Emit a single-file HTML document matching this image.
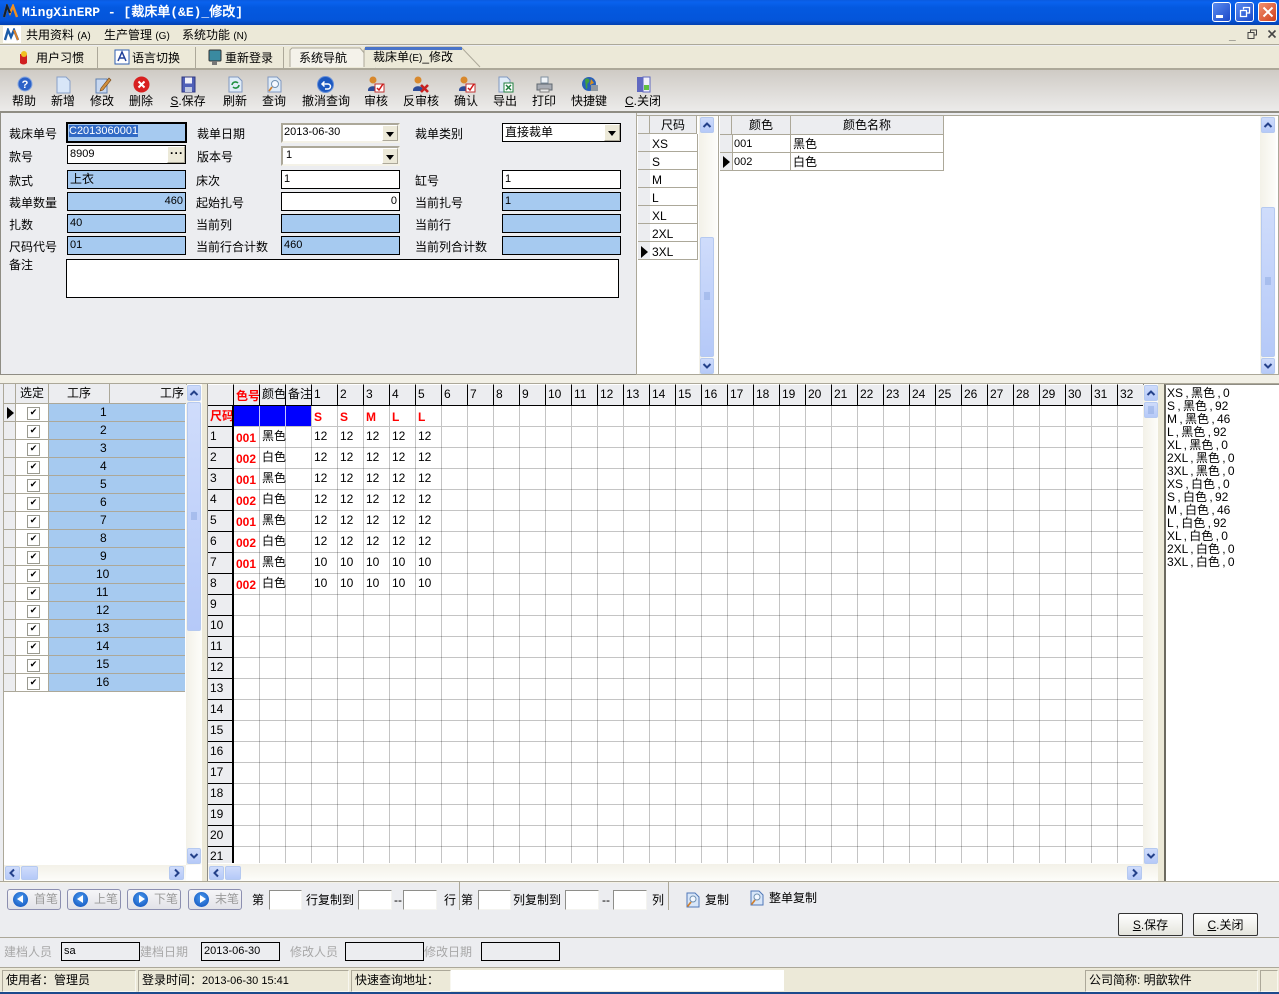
<!DOCTYPE html>
<html><head><meta charset="utf-8"><style>
html,body{margin:0;padding:0;width:1279px;height:994px;overflow:hidden;background:#ecedf0}
*{box-sizing:border-box}
body{position:relative;font:12px/14px "Liberation Sans","WenQuanYi Zen Hei","Noto Sans CJK SC",sans-serif;color:#000}
.a,.t,.f,.sb,.ti,.tb{position:absolute}
.t{white-space:nowrap;line-height:14px}
.f{border:1px solid #000;background:#a6caf0;height:19px;padding:1px 2px;line-height:15px;white-space:nowrap;font-size:11px}
.cj{font-size:12px}
.w{background:#fff}
.combo{border:2px solid;border-color:#aca899 #f4f2e8 #f4f2e8 #aca899;background:#fff}
.ar{position:absolute;right:0;top:0;bottom:0;width:16px;background:#ece9d8;border:1px solid;border-color:#fff #aca899 #aca899 #fff}
.ar.dn:after{content:"";position:absolute;left:3px;top:6px;border:4px solid transparent;border-top:5px solid #000;border-bottom:0}
.sb{background:linear-gradient(90deg,#f3f1e8,#fdfdfa)}
.btn{position:absolute;background:linear-gradient(#cfdcfb,#b5c9f8);border:1px solid #b5c9f0;border-radius:2px;color:#24418a;text-align:center}
.btn svg{display:block;margin:auto}
.th{position:absolute;background:#ecedf0;border-right:1px solid #aca899;border-bottom:1px solid #aca899;text-align:center;line-height:18px}
.gr{position:absolute;display:flex}
.gr i{font-style:normal;display:block;width:26px;height:22px;flex:none;padding-left:2px;line-height:19px;background:#ecedf0;border-right:1px solid #000;border-bottom:1px solid #000;border-top:1px solid #fff}
.rows{position:absolute;left:208px;top:427px;width:26px;height:436px;overflow:hidden}
.rows i{font-style:normal;display:block;height:21px;background:#ecedf0;padding:1px 0 0 2px;line-height:17px;border-right:2px solid #000;border-bottom:1px solid #000}
.dr{position:absolute;left:234px;display:flex;height:21px;line-height:19px}
.dr span{display:block;width:26px;flex:none;padding-left:2px}
.dr span:first-child{color:#f00;font-weight:bold;padding-top:2px}
.pr{position:absolute;left:16px;width:169px;height:18px;border-bottom:1px solid #aca899;display:flex}
.pr b{display:block;width:33px;background:#fff;border-right:1px solid #aca899;position:relative}
.pr b:after{content:"✔";position:absolute;left:11px;top:3px;width:11px;height:11px;border:1px solid #9a9a90;background:#fff;font:9px/10px "DejaVu Sans";text-align:center}
.pr em{font-style:normal;display:block;flex:1;background:#a6caf0;padding-left:51px;line-height:16px}
.pr em.d{padding-left:47px}
.ind{position:absolute;left:4px;width:12px;height:18px;background:#ecedf0;border-bottom:1px solid #aca899;border-right:1px solid #aca899}
.tri{position:absolute;border:6px solid transparent;border-left:7px solid #000;border-right:0}
.nav{position:absolute;top:889px;height:21px;border:1px solid #8c8fb0;border-radius:3px;background:linear-gradient(#f6f6f8,#e2e3e8);color:#9a9a9a;line-height:18px;padding-left:26px}
.nav:before{content:"";position:absolute;left:5px;top:2px;width:15px;height:15px;border-radius:50%;background:radial-gradient(circle at 50% 40%,#4c9cf0,#0a4cb8)}
.nav u{position:absolute;left:9px;top:5px;text-decoration:none;border:4px solid transparent;border-right:6px solid #fff;border-left:0}
.nav u.r{border-left:6px solid #fff;border-right:0;left:11px}
.in{position:absolute;top:890px;height:20px;background:#fff;border:1px solid;border-color:#8e8e8a #f4f4f0 #f4f4f0 #8e8e8a}
.pb{position:absolute;top:913px;width:65px;height:23px;border:1px solid #333;border-radius:2px;background:linear-gradient(#fff,#e4e4dc);text-align:center;line-height:22px}
.au{position:absolute;top:942px;height:19px;border:1px solid #000;background:#ecedf0;padding:1px 2px;line-height:15px;font-size:11px}
.st{position:absolute;top:970px;height:22px;background:#ece9d8;border:1px solid;border-color:#aca899 #f8f7f0 #f8f7f0 #aca899;line-height:19px;padding-left:3px;white-space:nowrap}
.ti{top:76px}
.tb{top:94px;transform:translateX(-50%);white-space:nowrap;line-height:14px}
.g{color:#a8a8a8}
.ln{position:absolute;background:#aca899}
.m{font-size:10px}
</style></head><body>

<!-- title bar -->
<div class="a" style="left:0;top:0;width:1279px;height:25px;background:linear-gradient(#0a5be0 0,#0a62ee 8%,#0459e0 30%,#0455da 80%,#0340b0 100%)"></div>
<svg class="a" style="left:3px;top:4px" width="16" height="14"><path d="M1 13L4 2L7 9L10 2L14 13" fill="none" stroke="#f09020" stroke-width="2.4"/><path d="M1 13L4 2L7 9" fill="none" stroke="#102030" stroke-width="2.2"/></svg>
<div class="t" style="left:22px;top:5px;color:#fff;font:bold 13px/16px 'Liberation Mono','WenQuanYi Zen Hei',monospace;white-space:pre">MingXinERP - [裁床单(&amp;E)_修改]</div>
<div class="a" style="left:1212px;top:2px;width:19px;height:20px;border:1px solid #fff;border-radius:3px;background:linear-gradient(135deg,#5a8cf0,#1c48c8)"><div class="a" style="left:3px;top:12px;width:7px;height:3px;background:#fff"></div></div>
<div class="a" style="left:1235px;top:2px;width:19px;height:20px;border:1px solid #fff;border-radius:3px;background:linear-gradient(135deg,#5a8cf0,#1c48c8)"><svg class="a" style="left:3px;top:3px" width="12" height="12"><path d="M4.5 3.5V1.5H10.5V7H8M1.500 4.500H7.500V10.500H1.500Z" fill="none" stroke="#fff" stroke-width="1.300"/></svg></div>
<div class="a" style="left:1258px;top:2px;width:19px;height:20px;border:1px solid #fff;border-radius:3px;background:linear-gradient(135deg,#f09070,#d0401c)"><svg class="a" style="left:3px;top:3px" width="12" height="12"><path d="M1.500 1.500L10.500 10.500M10.500 1.500L1.500 10.500" stroke="#fff" stroke-width="2"/></svg></div>

<!-- menu -->
<div class="a" style="left:0;top:25px;width:1279px;height:20px;background:#ece9d8;border-bottom:1px solid #aca899"></div>
<div class="a" style="left:3px;top:26px;width:18px;height:17px;background:#fff"></div>
<svg class="a" style="left:4px;top:28px" width="16" height="13"><path d="M1 12L4 2L7 9L10 2L14 12" fill="none" stroke="#1c5ca8" stroke-width="2.400"/><path d="M10 2L14 12" stroke="#e08020" stroke-width="2"/></svg>
<div class="t" style="left:26px;top:28px">共用资料 <span class="m">(A)</span></div>
<div class="t" style="left:104px;top:28px">生产管理 <span class="m">(G)</span></div>
<div class="t" style="left:182px;top:28px">系统功能 <span class="m">(N)</span></div>
<div class="t" style="left:1229px;top:28px;color:#555;font-weight:bold">_</div>
<svg class="a" style="left:1247px;top:29px" width="11" height="11"><path d="M3.500 3V1H9.500V6H7.500M1 3.500H7V9.500H1Z" fill="none" stroke="#444"/></svg>
<svg class="a" style="left:1267px;top:29px" width="10" height="10"><path d="M1.500 1.500L8.500 8.500M8.500 1.500L1.500 8.500" stroke="#444" stroke-width="1.600"/></svg>

<!-- tab bar -->
<div class="a" style="left:0;top:46px;width:1279px;height:24px;background:#ece9d8;border-bottom:2px solid #aca899"></div>
<div class="ln" style="left:97px;top:47px;width:1px;height:21px"></div>
<div class="ln" style="left:195px;top:47px;width:1px;height:21px"></div>
<div class="ln" style="left:283px;top:47px;width:1px;height:21px"></div>
<svg class="a" style="left:16px;top:50px" width="16" height="16"><path d="M4 4h7v9c-2 2-5 2-7 0z" fill="#d02020"/><circle cx="8" cy="4" r="3" fill="#f0c020"/></svg>
<div class="t" style="left:36px;top:51px">用户习惯</div>
<svg class="a" style="left:114px;top:49px" width="16" height="16"><rect x="1" y="1" width="14" height="14" fill="#fff" stroke="#3060b0"/><path d="M4 12L8 3L12 12M5.500 9H10.500" fill="none" stroke="#20409a" stroke-width="1.500"/></svg>
<div class="t" style="left:132px;top:51px">语言切换</div>
<svg class="a" style="left:208px;top:49px" width="14" height="18"><rect x="1" y="1" width="12" height="11" rx="1" fill="#3a8aa0" stroke="#333"/><rect x="4" y="12" width="5" height="4" fill="#777"/></svg>
<div class="t" style="left:225px;top:51px">重新登录</div>
<svg class="a" style="left:288px;top:46px" width="200" height="24"><path d="M2 21V4L4 2H72L88 21" fill="#f4f2ea" stroke="#aca899"/><path d="M76 21V4L78 1H173L192 21" fill="#ece9d8" stroke="#aca899"/><rect x="77" y="1" width="97" height="3" fill="#4a74c8"/></svg>
<div class="t" style="left:299px;top:51px">系统导航</div>
<div class="t" style="left:373px;top:50px">裁床单<span class="m">(E)</span>_修改</div>

<!-- toolbar -->
<div class="a" style="left:0;top:70px;width:1279px;height:43px;background:linear-gradient(#cfcbc5,#ecebea);border-bottom:2px solid #8f8d84"></div>

<svg class="ti" style="left:17px" width="16" height="16"><circle cx="8" cy="8" r="7" fill="#2c62c8" stroke="#88a8e0"/><text x="8" y="12" font-size="11" font-weight="bold" fill="#fff" text-anchor="middle" font-family="Liberation Sans">?</text></svg>
<svg class="ti" style="left:56px" width="15" height="18"><path d="M1 1H10L14 5V17H1Z" fill="#d8e6f8" stroke="#88a0c8"/></svg>
<svg class="ti" style="left:95px" width="17" height="18"><path d="M1 3H12V17H1Z" fill="#c8d8f0" stroke="#6080b0"/><path d="M6 12L14 2L16 4L8 14L5 15Z" fill="#d09040" stroke="#704010" stroke-width=".6"/></svg>
<svg class="ti" style="left:133px" width="17" height="17"><circle cx="8.500" cy="8.500" r="8" fill="#d82020"/><path d="M5.500 5.500L11.500 11.500M11.500 5.500L5.500 11.500" stroke="#fff" stroke-width="2"/></svg>
<svg class="ti" style="left:181px" width="15" height="17"><path d="M1 1H14V16H1Z" fill="#5060b8" stroke="#303880"/><rect x="4" y="1.500" width="7" height="6" fill="#f0f0f8"/><rect x="4" y="11" width="7" height="5" fill="#c0c8e0"/></svg>
<svg class="ti" style="left:228px" width="15" height="17"><path d="M1 1H10L14 5V16H1Z" fill="#e0ecf8" stroke="#8098c0"/><path d="M4 9a3.500 3.500 0 0 1 6-2M11 9a3.500 3.500 0 0 1-6 2" fill="none" stroke="#209040" stroke-width="1.600"/></svg>
<svg class="ti" style="left:267px" width="15" height="17"><path d="M1 1H10L14 5V16H1Z" fill="#e0ecf8" stroke="#8098c0"/><circle cx="8" cy="8" r="3.500" fill="#f4f8ff" stroke="#7090b0"/><path d="M5 11L2 15" stroke="#d08030" stroke-width="1.800"/></svg>
<svg class="ti" style="left:317px" width="17" height="17"><circle cx="8.500" cy="8.500" r="8" fill="#1c58c0" stroke="#6890d8"/><path d="M5 8H11a2.500 2.500 0 0 1 0 5H8M7.500 5.500L5 8L7.500 10.500" fill="none" stroke="#fff" stroke-width="1.500"/></svg>

<svg class="ti" style="left:367px" width="18" height="17"><circle cx="6" cy="4" r="3.500" fill="#d8882c"/><path d="M1 14C1 9 11 9 11 14V15H1Z" fill="#2c4c98"/><rect x="8" y="8" width="9" height="8" fill="#fff" stroke="#c03030"/><path d="M10 12L12 14L16 8" fill="none" stroke="#d01818" stroke-width="1.500"/></svg>
<svg class="ti" style="left:412px" width="18" height="17"><circle cx="6" cy="4" r="3.500" fill="#d8882c"/><path d="M1 14C1 9 11 9 11 14V15H1Z" fill="#2c4c98"/><path d="M9 9L16 16M16 9L9 16" stroke="#c82020" stroke-width="2.600"/></svg>
<svg class="ti" style="left:458px" width="18" height="17"><circle cx="6" cy="4" r="3.500" fill="#d8882c"/><path d="M1 14C1 9 11 9 11 14V15H1Z" fill="#2c4c98"/><rect x="8" y="8" width="9" height="8" fill="#fff" stroke="#c03030"/><path d="M10 12L12 14L16 8" fill="none" stroke="#d01818" stroke-width="1.500"/></svg>
<svg class="ti" style="left:498px" width="16" height="17"><path d="M1 1H9L12 4V16H1Z" fill="#e0ecf8" stroke="#8098c0"/><rect x="6" y="7" width="9" height="9" fill="#fff" stroke="#208040"/><path d="M8 9L13 14M13 9L8 14" stroke="#208040" stroke-width="1.500"/></svg>
<svg class="ti" style="left:536px" width="17" height="17"><path d="M5 1H12V7H5Z" fill="#f0f4f8" stroke="#8090a0"/><path d="M1 8H16V14H1Z" fill="#a8acb4" stroke="#606870"/><rect x="4" y="13" width="9" height="3" fill="#e8e8e8" stroke="#808080"/></svg>
<svg class="ti" style="left:581px" width="18" height="17"><circle cx="8" cy="8" r="7" fill="#2860b8"/><path d="M4 3C8 1 10 5 7 7C5 9 8 12 5 13Z" fill="#40a040"/><path d="M10 3L13 7L9 9Z" fill="#d89020"/><rect x="10" y="9" width="7" height="6" fill="#9098a0"/></svg>
<svg class="ti" style="left:636px" width="15" height="17"><rect x="1" y="1" width="6" height="15" fill="#6068c0"/><rect x="7" y="1" width="7" height="15" fill="#f0f0fa" stroke="#6068c0"/><rect x="8" y="9" width="5" height="5" fill="#60c040"/></svg>

<div class="tb" style="left:24px">帮助</div>
<div class="tb" style="left:63px">新增</div>
<div class="tb" style="left:102px">修改</div>
<div class="tb" style="left:141px">删除</div>
<div class="tb" style="left:188px"><u>S</u>.保存</div>
<div class="tb" style="left:235px">刷新</div>
<div class="tb" style="left:274px">查询</div>
<div class="tb" style="left:326px">撤消查询</div>
<div class="tb" style="left:376px">审核</div>
<div class="tb" style="left:421px">反审核</div>
<div class="tb" style="left:466px">确认</div>
<div class="tb" style="left:505px">导出</div>
<div class="tb" style="left:544px">打印</div>
<div class="tb" style="left:589px">快捷键</div>
<div class="tb" style="left:643px"><u>C</u>.关闭</div>

<!-- form panel -->
<div class="a" style="left:0;top:113px;width:637px;height:262px;border:1px solid #8f8d84;border-top:0;border-right:1px solid #aca899;background:#ecedf0"></div>

<div class="t" style="left:9px;top:127px">裁床单号</div>
<div class="f" style="left:66px;top:122px;width:121px;height:21px;border-width:2px;padding:0 1px"><span style="background:#316ac5;color:#fff">C2013060001</span></div>
<div class="t" style="left:197px;top:127px">裁单日期</div>
<div class="f w combo" style="left:281px;top:123px;width:119px;height:20px;padding:0 1px">2013-06-30<div class="ar dn"></div></div>
<div class="t" style="left:415px;top:127px">裁单类别</div>
<div class="f w cj" style="left:502px;top:123px;width:119px;height:19px;padding:1px 2px">直接裁单<div class="ar dn"></div></div>

<div class="t" style="left:9px;top:150px">款号</div>
<div class="f w" style="left:67px;top:145px;width:119px;height:19px">8909<div class="ar" style="width:18px"></div></div>
<div class="t" style="left:170px;top:146px;font-weight:bold;letter-spacing:.5px">···</div>
<div class="t" style="left:197px;top:150px">版本号</div>
<div class="f w combo" style="left:281px;top:146px;width:119px;height:20px;padding:0 3px">1<div class="ar dn"></div></div>

<div class="t" style="left:9px;top:174px">款式</div>
<div class="f cj" style="left:67px;top:170px;width:119px">上衣</div>
<div class="t" style="left:196px;top:174px">床次</div>
<div class="f w" style="left:281px;top:170px;width:119px">1</div>
<div class="t" style="left:415px;top:174px">缸号</div>
<div class="f w" style="left:502px;top:170px;width:119px">1</div>

<div class="t" style="left:9px;top:196px">裁单数量</div>
<div class="f" style="left:67px;top:192px;width:119px;text-align:right">460</div>
<div class="t" style="left:196px;top:196px">起始扎号</div>
<div class="f w" style="left:281px;top:192px;width:119px;text-align:right">0</div>
<div class="t" style="left:415px;top:196px">当前扎号</div>
<div class="f" style="left:502px;top:192px;width:119px">1</div>

<div class="t" style="left:9px;top:218px">扎数</div>
<div class="f" style="left:67px;top:214px;width:119px">40</div>
<div class="t" style="left:196px;top:218px">当前列</div>
<div class="f" style="left:281px;top:214px;width:119px"></div>
<div class="t" style="left:415px;top:218px">当前行</div>
<div class="f" style="left:502px;top:214px;width:119px"></div>

<div class="t" style="left:9px;top:240px">尺码代号</div>
<div class="f" style="left:67px;top:236px;width:119px">01</div>
<div class="t" style="left:196px;top:240px">当前行合计数</div>
<div class="f" style="left:281px;top:236px;width:119px">460</div>
<div class="t" style="left:415px;top:240px">当前列合计数</div>
<div class="f" style="left:502px;top:236px;width:119px"></div>

<div class="t" style="left:9px;top:258px">备注</div>
<div class="f w" style="left:66px;top:259px;width:553px;height:39px"></div>

<!-- size grid -->
<div class="a" style="left:636px;top:115px;width:83px;height:260px;background:#fff;border:1px solid #aca899"></div>
<div class="th" style="left:638px;top:116px;width:12px;height:18px"></div>
<div class="th" style="left:650px;top:116px;width:47px;height:18px">尺码</div>
<div class="a" style="left:638px;top:134px;width:12px;height:126px;background:repeating-linear-gradient(#ecedf0 0,#ecedf0 17px,#aca899 17px,#aca899 18px)"></div>
<div class="a" style="left:650px;top:134px;width:48px;height:126px;border-right:1px solid #aca899;background:repeating-linear-gradient(#fff 0,#fff 17px,#aca899 17px,#aca899 18px)"></div>
<div class="t" style="left:652px;top:137px">XS</div>
<div class="t" style="left:652px;top:155px">S</div>
<div class="t" style="left:652px;top:173px">M</div>
<div class="t" style="left:652px;top:191px">L</div>
<div class="t" style="left:652px;top:209px">XL</div>
<div class="t" style="left:652px;top:227px">2XL</div>
<div class="t" style="left:652px;top:245px">3XL</div>
<div class="tri" style="left:641px;top:246px"></div>
<div class="sb" style="left:699px;top:116px;width:18px;height:258px"></div>
<div class="btn" style="left:700px;top:117px;width:14px;height:16px"><svg width="12" height="14"><path d="M2.500 9L6 5.500L9.500 9" fill="none" stroke="#24418a" stroke-width="2"/></svg></div>
<div class="btn" style="left:700px;top:237px;width:14px;height:120px"><svg width="12" height="118"><path d="M3 55H9M3 57H9M3 59H9M3 61H9" stroke="#8ca8e0"/></svg></div>
<div class="btn" style="left:700px;top:358px;width:14px;height:16px"><svg width="12" height="14"><path d="M2.500 5L6 8.500L9.500 5" fill="none" stroke="#24418a" stroke-width="2"/></svg></div>

<!-- color grid -->
<div class="a" style="left:718px;top:115px;width:561px;height:260px;background:#fff;border:1px solid #aca899"></div>
<div class="th" style="left:720px;top:116px;width:12px;height:19px"></div>
<div class="th" style="left:732px;top:116px;width:59px;height:19px">颜色</div>
<div class="th" style="left:791px;top:116px;width:153px;height:19px">颜色名称</div>
<div class="a" style="left:720px;top:135px;width:12px;height:36px;background:repeating-linear-gradient(#ecedf0 0,#ecedf0 17px,#aca899 17px,#aca899 18px)"></div>
<div class="a" style="left:732px;top:135px;width:212px;height:36px;border-right:1px solid #aca899;background:repeating-linear-gradient(#fff 0,#fff 17px,#aca899 17px,#aca899 18px)"></div>
<div class="ln" style="left:732px;top:135px;width:1px;height:36px"></div>
<div class="ln" style="left:790px;top:135px;width:1px;height:36px"></div>
<div class="t" style="left:734px;top:137px;font-size:11px">001</div><div class="t" style="left:793px;top:137px">黑色</div>
<div class="t" style="left:734px;top:155px;font-size:11px">002</div><div class="t" style="left:793px;top:155px">白色</div>
<div class="tri" style="left:723px;top:156px"></div>
<div class="sb" style="left:1260px;top:116px;width:16px;height:258px"></div>
<div class="btn" style="left:1261px;top:117px;width:14px;height:16px"><svg width="12" height="14"><path d="M2.500 9L6 5.500L9.500 9" fill="none" stroke="#24418a" stroke-width="2"/></svg></div>
<div class="btn" style="left:1261px;top:207px;width:14px;height:150px"><svg width="12" height="148"><path d="M3 70H9M3 72H9M3 74H9M3 76H9" stroke="#8ca8e0"/></svg></div>
<div class="btn" style="left:1261px;top:358px;width:14px;height:16px"><svg width="12" height="14"><path d="M2.500 5L6 8.500L9.500 5" fill="none" stroke="#24418a" stroke-width="2"/></svg></div>

<!-- middle section -->
<div class="a" style="left:0;top:375px;width:1279px;height:9px;background:#f2f0e6"></div>
<div class="ln" style="left:0;top:383px;width:1279px;height:1px"></div>

<!-- left process grid -->
<div class="a" style="left:3px;top:384px;width:200px;height:497px;background:#fff;border-left:1px solid #aca899"></div>
<div class="a" style="left:202px;top:384px;width:6px;height:497px;background:#ece9d8"></div>
<div class="th" style="left:4px;top:384px;width:12px;height:20px"></div>
<div class="th" style="left:16px;top:384px;width:33px;height:20px">选定</div>
<div class="th" style="left:49px;top:384px;width:61px;height:20px">工序</div>
<div class="th" style="left:110px;top:384px;width:77px;height:20px;text-align:right;padding-right:2px">工序</div>

<div class="ind" style="top:404px"></div><div class="ind" style="top:422px"></div><div class="ind" style="top:440px"></div><div class="ind" style="top:458px"></div><div class="ind" style="top:476px"></div><div class="ind" style="top:494px"></div><div class="ind" style="top:512px"></div><div class="ind" style="top:530px"></div><div class="ind" style="top:548px"></div><div class="ind" style="top:566px"></div><div class="ind" style="top:584px"></div><div class="ind" style="top:602px"></div><div class="ind" style="top:620px"></div><div class="ind" style="top:638px"></div><div class="ind" style="top:656px"></div><div class="ind" style="top:674px"></div>
<div class="tri" style="left:7px;top:407px"></div>

<div class="pr" style="top:404px"><b></b><em>1</em></div>
<div class="pr" style="top:422px"><b></b><em>2</em></div>
<div class="pr" style="top:440px"><b></b><em>3</em></div>
<div class="pr" style="top:458px"><b></b><em>4</em></div>
<div class="pr" style="top:476px"><b></b><em>5</em></div>
<div class="pr" style="top:494px"><b></b><em>6</em></div>
<div class="pr" style="top:512px"><b></b><em>7</em></div>
<div class="pr" style="top:530px"><b></b><em>8</em></div>
<div class="pr" style="top:548px"><b></b><em>9</em></div>
<div class="pr" style="top:566px"><b></b><em class="d">10</em></div>
<div class="pr" style="top:584px"><b></b><em class="d">11</em></div>
<div class="pr" style="top:602px"><b></b><em class="d">12</em></div>
<div class="pr" style="top:620px"><b></b><em class="d">13</em></div>
<div class="pr" style="top:638px"><b></b><em class="d">14</em></div>
<div class="pr" style="top:656px"><b></b><em class="d">15</em></div>
<div class="pr" style="top:674px"><b></b><em class="d">16</em></div>

<div class="sb" style="left:186px;top:385px;width:16px;height:480px"></div>
<div class="btn" style="left:187px;top:385px;width:14px;height:16px"><svg width="12" height="14"><path d="M2.500 9L6 5.500L9.500 9" fill="none" stroke="#24418a" stroke-width="2"/></svg></div>
<div class="btn" style="left:187px;top:402px;width:14px;height:229px"><svg width="12" height="227"><path d="M3 110H9M3 112H9M3 114H9M3 116H9" stroke="#8ca8e0"/></svg></div>
<div class="btn" style="left:187px;top:848px;width:14px;height:16px"><svg width="12" height="14"><path d="M2.500 5L6 8.500L9.500 5" fill="none" stroke="#24418a" stroke-width="2"/></svg></div>
<div class="sb" style="left:4px;top:865px;width:182px;height:16px;background:linear-gradient(#f3f1e8,#fdfdfa)"></div>
<div class="btn" style="left:5px;top:866px;width:15px;height:14px"><svg width="13" height="12"><path d="M8 2.500L4.500 6L8 9.500" fill="none" stroke="#24418a" stroke-width="2"/></svg></div>
<div class="btn" style="left:21px;top:866px;width:17px;height:14px"></div>
<div class="btn" style="left:169px;top:866px;width:15px;height:14px"><svg width="13" height="12"><path d="M5 2.500L8.500 6L5 9.500" fill="none" stroke="#24418a" stroke-width="2"/></svg></div>

<!-- main grid -->
<div class="a" style="left:207px;top:384px;width:951px;height:497px;background:#fff;border-left:1px solid #8f8d84"></div>
<div class="a" style="left:234px;top:427px;width:909px;height:436px;background-image:repeating-linear-gradient(90deg,#fff 0,#fff 25px,#c4c4c4 25px,#c4c4c4 26px),repeating-linear-gradient(#fff 0,#fff 20px,#c4c4c4 20px,#c4c4c4 21px);background-blend-mode:multiply"></div>
<div class="a" style="left:234px;top:406px;width:909px;height:21px;background-image:repeating-linear-gradient(90deg,#fff 0,#fff 25px,#c4c4c4 25px,#c4c4c4 26px);border-bottom:1px solid #c4c4c4"></div>
<div class="a" style="left:234px;top:406px;width:77px;height:20px;background:repeating-linear-gradient(90deg,#00f 0,#00f 25px,#c4c4ff 25px,#c4c4ff 26px)"></div>

<div class="gr" style="left:208px;top:384px">
<i></i><i style="color:#f00;font-weight:bold;padding:2px 0 0 2px;overflow:hidden;white-space:nowrap">色号</i><i style="overflow:hidden;white-space:nowrap">颜色</i><i style="overflow:hidden;white-space:nowrap">备注</i><i>1</i><i>2</i><i>3</i><i>4</i><i>5</i><i>6</i><i>7</i><i>8</i><i>9</i><i>10</i><i>11</i><i>12</i><i>13</i><i>14</i><i>15</i><i>16</i><i>17</i><i>18</i><i>19</i><i>20</i><i>21</i><i>22</i><i>23</i><i>24</i><i>25</i><i>26</i><i>27</i><i>28</i><i>29</i><i>30</i><i>31</i><i>32</i>
</div>
<div class="a" style="left:208px;top:406px;width:26px;height:21px;background:#ecedf0;border-right:2px solid #000;border-bottom:1px solid #000;color:#f00;font-weight:bold;padding:3px 0 0 2px;overflow:hidden;white-space:nowrap">尺码</div>
<div class="t" style="left:314px;top:410px;color:#f00;font-weight:bold">S</div>
<div class="t" style="left:340px;top:410px;color:#f00;font-weight:bold">S</div>
<div class="t" style="left:366px;top:410px;color:#f00;font-weight:bold">M</div>
<div class="t" style="left:392px;top:410px;color:#f00;font-weight:bold">L</div>
<div class="t" style="left:418px;top:410px;color:#f00;font-weight:bold">L</div>

<div class="rows"><i>1</i><i>2</i><i>3</i><i>4</i><i>5</i><i>6</i><i>7</i><i>8</i><i>9</i><i>10</i><i>11</i><i>12</i><i>13</i><i>14</i><i>15</i><i>16</i><i>17</i><i>18</i><i>19</i><i>20</i><i>21</i></div>

<div class="dr" style="top:427px"><span>001</span><span>黑色</span><span></span><span>12</span><span>12</span><span>12</span><span>12</span><span>12</span></div>
<div class="dr" style="top:448px"><span>002</span><span>白色</span><span></span><span>12</span><span>12</span><span>12</span><span>12</span><span>12</span></div>
<div class="dr" style="top:469px"><span>001</span><span>黑色</span><span></span><span>12</span><span>12</span><span>12</span><span>12</span><span>12</span></div>
<div class="dr" style="top:490px"><span>002</span><span>白色</span><span></span><span>12</span><span>12</span><span>12</span><span>12</span><span>12</span></div>
<div class="dr" style="top:511px"><span>001</span><span>黑色</span><span></span><span>12</span><span>12</span><span>12</span><span>12</span><span>12</span></div>
<div class="dr" style="top:532px"><span>002</span><span>白色</span><span></span><span>12</span><span>12</span><span>12</span><span>12</span><span>12</span></div>
<div class="dr" style="top:553px"><span>001</span><span>黑色</span><span></span><span>10</span><span>10</span><span>10</span><span>10</span><span>10</span></div>
<div class="dr" style="top:574px"><span>002</span><span>白色</span><span></span><span>10</span><span>10</span><span>10</span><span>10</span><span>10</span></div>

<div class="sb" style="left:1143px;top:385px;width:15px;height:480px"></div>
<div class="btn" style="left:1144px;top:385px;width:14px;height:16px"><svg width="12" height="14"><path d="M2.500 9L6 5.500L9.500 9" fill="none" stroke="#24418a" stroke-width="2"/></svg></div>
<div class="btn" style="left:1144px;top:402px;width:14px;height:16px"><svg width="12" height="14"><path d="M3 4H9M3 6H9M3 8H9M3 10H9" stroke="#8ca8e0"/></svg></div>
<div class="btn" style="left:1144px;top:848px;width:14px;height:16px"><svg width="12" height="14"><path d="M2.500 5L6 8.500L9.500 5" fill="none" stroke="#24418a" stroke-width="2"/></svg></div>
<div class="sb" style="left:208px;top:864px;width:950px;height:17px;background:linear-gradient(#f3f1e8,#fdfdfa)"></div>
<div class="btn" style="left:209px;top:866px;width:15px;height:14px"><svg width="13" height="12"><path d="M8 2.500L4.500 6L8 9.500" fill="none" stroke="#24418a" stroke-width="2"/></svg></div>
<div class="btn" style="left:225px;top:866px;width:16px;height:14px"></div>
<div class="btn" style="left:1127px;top:866px;width:15px;height:14px"><svg width="13" height="12"><path d="M5 2.500L8.500 6L5 9.500" fill="none" stroke="#24418a" stroke-width="2"/></svg></div>

<!-- right list -->
<div class="a" style="left:1158px;top:384px;width:6px;height:497px;background:#ece9d8"></div>
<div class="a" style="left:1164px;top:384px;width:115px;height:497px;background:#fff;border-left:2px solid #6c6a60;border-top:1px solid #8f8d84;padding:2px 0 0 1px;line-height:13px;white-space:nowrap;word-spacing:-1px">
XS , 黑色 , 0<br>S , 黑色 , 92<br>M , 黑色 , 46<br>L , 黑色 , 92<br>XL , 黑色 , 0<br>2XL , 黑色 , 0<br>3XL , 黑色 , 0<br>XS , 白色 , 0<br>S , 白色 , 92<br>M , 白色 , 46<br>L , 白色 , 92<br>XL , 白色 , 0<br>2XL , 白色 , 0<br>3XL , 白色 , 0
</div>

<!-- nav strip -->
<div class="a" style="left:0;top:881px;width:1279px;height:2px;background:#f4f2e8;border-top:1px solid #aca899"></div>
<div class="nav" style="left:7px;width:54px"><u></u>首笔</div>
<div class="nav" style="left:67px;width:54px"><u></u>上笔</div>
<div class="nav" style="left:127px;width:54px"><u class="r"></u>下笔</div>
<div class="nav" style="left:188px;width:54px"><u class="r"></u>末笔</div>

<div class="t" style="left:252px;top:893px">第</div>
<div class="in" style="left:269px;width:33px"></div>
<div class="t" style="left:306px;top:893px">行复制到</div>
<div class="in" style="left:358px;width:34px"></div>
<div class="t" style="left:394px;top:893px">--</div>
<div class="in" style="left:403px;width:34px"></div>
<div class="t" style="left:444px;top:893px">行</div>
<div class="ln" style="left:459px;top:882px;width:1px;height:28px"></div>
<div class="t" style="left:461px;top:893px">第</div>
<div class="in" style="left:478px;width:33px"></div>
<div class="t" style="left:513px;top:893px">列复制到</div>
<div class="in" style="left:565px;width:34px"></div>
<div class="t" style="left:602px;top:893px">--</div>
<div class="in" style="left:613px;width:34px"></div>
<div class="t" style="left:652px;top:893px">列</div>
<div class="ln" style="left:668px;top:882px;width:1px;height:28px"></div>

<svg class="a" style="left:686px;top:892px" width="14" height="16"><path d="M1 1H9L13 5V15H1Z" fill="#d8e6f8" stroke="#5078b8"/><circle cx="7" cy="7" r="3" fill="#f4f8ff" stroke="#7090b0"/><path d="M5 10L1.500 14.500" stroke="#d08030" stroke-width="1.800"/></svg>
<div class="t" style="left:705px;top:893px">复制</div>
<svg class="a" style="left:750px;top:890px" width="14" height="16"><path d="M1 1H9L13 5V15H1Z" fill="#d8e6f8" stroke="#5078b8"/><circle cx="7" cy="7" r="3" fill="#f4f8ff" stroke="#7090b0"/><path d="M5 10L1.500 14.500" stroke="#d08030" stroke-width="1.800"/></svg>
<div class="t" style="left:769px;top:891px">整单复制</div>

<div class="pb" style="left:1118px"><u>S</u>.保存</div>
<div class="pb" style="left:1193px"><u>C</u>.关闭</div>

<div class="ln" style="left:0;top:937px;width:1279px;height:1px"></div>
<div class="t g" style="left:4px;top:945px">建档人员</div>
<div class="au" style="left:61px;width:79px">sa</div>
<div class="t g" style="left:140px;top:945px">建档日期</div>
<div class="au" style="left:201px;width:79px">2013-06-30</div>
<div class="t g" style="left:290px;top:945px">修改人员</div>
<div class="au" style="left:345px;width:79px"></div>
<div class="t g" style="left:424px;top:945px">修改日期</div>
<div class="au" style="left:481px;width:79px"></div>

<!-- status bar -->
<div class="a" style="left:0;top:967px;width:1279px;height:25px;background:#ece9d8;border-top:1px solid #aca899"></div>
<div class="st" style="left:2px;width:134px">使用者：管理员</div>
<div class="st" style="left:138px;width:211px">登录时间：<span style="font-size:11px">2013-06-30 15:41</span></div>
<div class="st" style="left:351px;width:100px">快速查询地址：</div>
<div class="a" style="left:451px;top:970px;width:333px;height:21px;background:#fff"></div>
<div class="st" style="left:1085px;width:173px">公司简称: 明歆软件</div>
<div class="st" style="left:1260px;width:18px"></div>
<div class="a" style="left:0;top:992px;width:1279px;height:2px;background:#1c4a8c"></div>
</body></html>
